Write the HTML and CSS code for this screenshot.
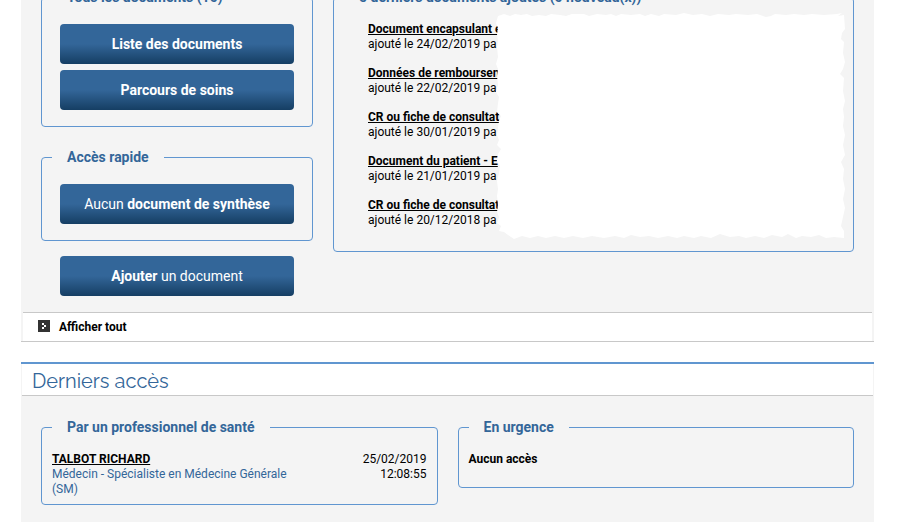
FILE: index.html
```html
<!DOCTYPE html>
<html lang="fr">
<head>
  <meta charset="UTF-8" />
  <title>Documents et derniers accès</title>
  <link rel="stylesheet" href="styles.css">
</head>
<body>
  <main class="page">

    <section class="panel">
      <div class="panel-body documents">
        <div class="sidebar">
          <fieldset class="box">
            <legend>Tous les documents (10)</legend>
            <div class="actions">
              <button type="button" class="btn"><b>Liste des documents</b></button>
              <button type="button" class="btn"><b>Parcours de soins</b></button>
            </div>
          </fieldset>
          <fieldset class="box">
            <legend>Accès rapide</legend>
            <div class="actions">
              <button type="button" class="btn">Aucun <b>document de synthèse</b></button>
            </div>
          </fieldset>
          <div class="add">
            <button type="button" class="btn"><b>Ajouter</b> un document</button>
          </div>
        </div>

        <fieldset class="box recent">
          <legend>5 derniers documents ajoutés (0 nouveau(x))</legend>
          <ul class="doc-list">
            <li><a href="#">Document encapsulant e</a><span>ajouté le 24/02/2019 pa</span></li>
            <li><a href="#">Données de remboursem</a><span>ajouté le 22/02/2019 pa</span></li>
            <li><a href="#">CR ou fiche de consultat</a><span>ajouté le 30/01/2019 pa</span></li>
            <li><a href="#">Document du patient - E</a><span>ajouté le 21/01/2019 pa</span></li>
            <li><a href="#">CR ou fiche de consultat</a><span>ajouté le 20/12/2018 pa</span></li>
          </ul>
          <svg class="mask" viewBox="0 0 350 226" preserveAspectRatio="none" aria-hidden="true">
            <path d="M2 3 L8 1 L14 3 L19 1 L25 2 L31 1 L36 3 L43 2 L50 3 L55 1 L64 2 L70 3 L76 1 L88 1 L93 3 L101 1 L110 2 L115 1 L120 3 L125 1 L135 2 L144 1 L149 3 L155 1 L163 3 L168 1 L180 2 L188 0 L197 2 L206 1 L214 3 L222 1 L233 2 L240 1 L252 2 L261 1 L270 4 L275 3 L279 1 L290 2 L298 1 L308 2 L316 1 L328 2 L341 1 L346 0 L342 3 L348 2 L349 16 L346 20 L345 26 L348 29 L347 40 L349 49 L347 56 L344 61 L348 65 L347 78 L349 88 L347 96 L348 104 L347 113 L349 122 L347 132 L349 142 L345 149 L348 156 L347 166 L349 176 L347 186 L349 195 L347 204 L345 213 L348 218 L348 225 L338 224 L330 225 L323 222 L315 224 L306 223 L300 225 L292 221 L286 224 L276 222 L268 225 L259 223 L250 225 L243 223 L234 224 L224 221 L215 225 L205 223 L198 225 L188 223 L181 225 L172 223 L162 225 L153 223 L144 224 L135 222 L128 225 L119 223 L108 225 L96 223 L87 225 L77 223 L68 225 L59 223 L50 225 L42 223 L34 225 L26 223 L18 226 L12 222 L8 219 L3 218 L5 213 L1 210 L3 204 L1 199 L2 192 L1 183 L2 176 L1 168 L3 160 L4 153 L1 148 L2 141 L5 136 L1 132 L3 127 L1 122 L2 115 L3 108 L5 103 L1 99 L2 90 L3 84 L0 79 L2 72 L1 63 L2 56 L0 51 L2 44 L1 34 L2 28 L1 21 L2 15 L0 10 Z" />
          </svg>
        </fieldset>
      </div>
      <div class="panel-footer">
        <a href="#" class="show-all">
          <svg width="12" height="12" viewBox="0 0 12 12" aria-hidden="true">
            <rect width="12" height="12" fill="#333" />
            <path d="M4 3h2v2h-2zM6 5h2v2h-2zM4 7h2v2h-2z" fill="#fff" />
          </svg>
          Afficher tout
        </a>
      </div>
    </section>

    <section class="panel">
      <h2 class="panel-title">Derniers accès</h2>
      <div class="panel-body access">
        <fieldset class="box">
          <legend>Par un professionnel de santé</legend>
          <div class="entry">
            <div class="who">
              <a href="#">TALBOT RICHARD</a>
              <span class="role">Médecin - Spécialiste en Médecine Générale (SM)</span>
            </div>
            <div class="when">25/02/2019<br>12:08:55</div>
          </div>
        </fieldset>
        <fieldset class="box">
          <legend>En urgence</legend>
          <p class="none">Aucun accès</p>
        </fieldset>
      </div>
    </section>

  </main>
</body>
</html>
```
FILE: styles.css
```css
body {
  margin: 0;
  background: #fff;
  color: #000;
  font-family: Roboto, Arial, sans-serif;
  font-size: 12px;
  line-height: 15px;
}
a {
  color: #000;
  font-weight: bold;
}
.page {
  margin: -34px 50px 0 21px;
}
.panel {
  margin-bottom: 20px;
  background: #f4f4f4;
}
.panel:last-child {
  margin-bottom: 0;
  border-top: 2px solid #6096d0;
}
.panel-title {
  margin: 0 1px;
  padding: 3px 10px 0;
  background: #fff;
  border-bottom: 1px solid #c8c8c8;
  color: #336699;
  font-family: Raleway, Lato, sans-serif;
  font-size: 20px;
  font-weight: 400;
  line-height: 28px;
}
.panel-body {
  display: grid;
  gap: 20px;
  align-items: start;
  padding: 22px 20px 16px;
}
.documents {
  grid-template-columns: 272px 1fr;
}
.access {
  grid-template-columns: 1fr 1fr;
  padding-bottom: 20px;
}

.box {
  position: relative;
  min-width: 0;
  margin: 0;
  padding: 16px 10px 7px;
  border: 1px solid #6096d0;
  border-radius: 4px;
}
.box legend {
  padding: 0 15px;
  color: #336699;
  font-size: 14px;
  font-weight: bold;
  line-height: 18px;
}
.sidebar .box {
  margin-bottom: 21px;
}
.sidebar .box + .box {
  margin-bottom: 15px;
}
.actions {
  display: flex;
  flex-direction: column;
  gap: 6px;
  padding: 2px 8px 9px;
}
.add {
  padding: 0 19px;
}
.btn {
  display: block;
  width: 100%;
  height: 40px;
  padding: 0;
  border: 0;
  border-radius: 4px;
  background: linear-gradient(#336699 50%, #153e63);
  color: #fff;
  font-family: inherit;
  font-size: 14px;
}

.doc-list {
  display: flex;
  flex-direction: column;
  gap: 14px;
  margin: 0;
  padding: 0 0 16px 24px;
  list-style: none;
}
.doc-list a,
.doc-list span,
.who a,
.role {
  display: block;
}
.mask {
  position: absolute;
  top: 7px;
  left: 162px;
  width: calc(100% - 169px);
  height: 226px;
  fill: #fff;
}

.panel-footer {
  padding: 0 2px;
  border-bottom: 1px solid #c8c8c8;
}
.show-all {
  display: flex;
  align-items: flex-start;
  gap: 9px;
  padding: 7px 15px 6px;
  border-top: 1px solid #c8c8c8;
  background: #fff;
  text-decoration: none;
}

.entry {
  display: flex;
  justify-content: space-between;
}
.who {
  width: 66%;
}
.role {
  color: #336699;
}
.when {
  text-align: right;
}
.none {
  margin: 0;
  padding-bottom: 13px;
  font-weight: bold;
}
```
